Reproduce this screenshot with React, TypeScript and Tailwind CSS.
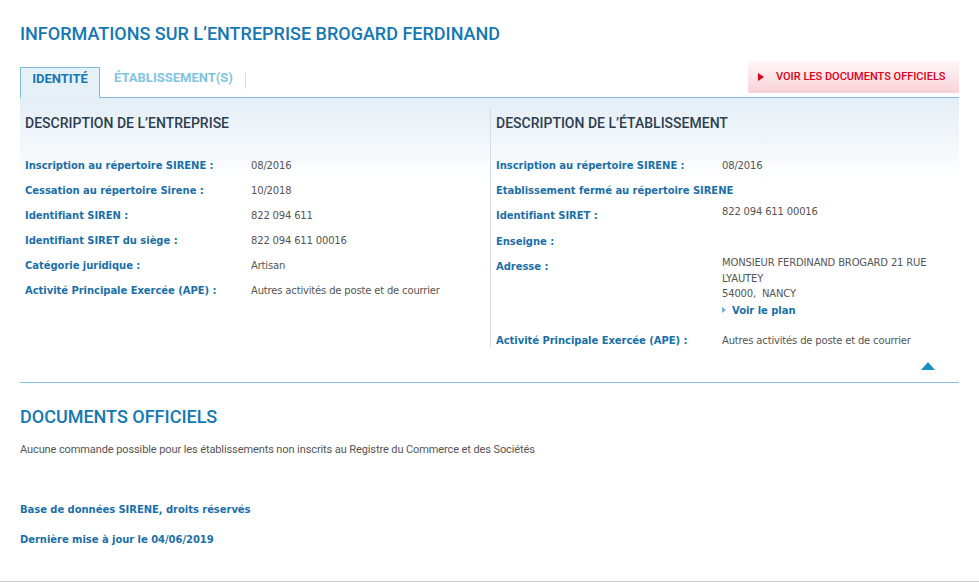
export default function App() {
  const din = "font-['Roboto',sans-serif]";
  const tah = "font-['DejaVu_Sans',sans-serif]";

  const leftRows = [
    ["Inscription au répertoire SIRENE :", "08/2016"],
    ["Cessation au répertoire Sirene :", "10/2018"],
    ["Identifiant SIREN :", "822 094 611"],
    ["Identifiant SIRET du siège :", "822 094 611 00016"],
    ["Catégorie juridique :", "Artisan"],
    ["Activité Principale Exercée (APE) :", "Autres activités de poste et de courrier"],
  ];

  return (
    <div className="min-h-[582px] bg-white px-5 border-b border-[#c8c8c8]">
      {/* Titre */}
      <h1 className={`${din} pt-[24px] text-[18px] leading-[20px] font-medium text-[#1478b4]`}>
        INFORMATIONS SUR L’ENTREPRISE BROGARD FERDINAND
      </h1>

      {/* Onglets */}
      <div className="mt-[23px] flex items-end">
        <div className="flex items-end flex-1">
          <div className={`${din} h-[31px] w-[80px] border border-b-0 border-[#7fbcd9] bg-[#e6f0f7] text-[13px] font-bold text-[#1478b4] flex items-center justify-center`}>
            <span className="mb-[8px]">IDENTITÉ</span>
          </div>
          <div className="flex-1 h-[31px] border-b border-[#7fbcd9] flex items-center">
            <span className={`${din} ml-[14px] mb-[8px] text-[13px] font-bold text-[#80c4e0]`}>ÉTABLISSEMENT(S)</span>
            <span className="ml-[12px] mb-[2px] h-[16px] w-px bg-[#dcdcdc]" />
            <span className="flex-1" />
            <div className="self-start -mt-[6px] w-[211px] h-[32px] bg-[linear-gradient(to_bottom,#fff6f7,#f9d3d8)] flex items-center">
              <svg width="6" height="8" viewBox="0 0 6 8" className="ml-[10px]">
                <path d="M0 0 L6 4 L0 8 Z" fill="#d9001b" />
              </svg>
              <span className={`${din} ml-[12px] text-[11px] font-medium text-[#d9001b]`}>VOIR LES DOCUMENTS OFFICIELS</span>
            </div>
          </div>
        </div>
      </div>

      {/* Panneau description */}
      <div className="flex bg-[linear-gradient(to_bottom,#e4eef6_0px,#ffffff_85px)] pb-[15px]">
        <div className="w-[470px] pl-[5px]">
          <h2 className={`${din} pt-[15px] text-[14px] leading-[20px] font-medium text-[#2d3e50]`}>
            DESCRIPTION DE L’ENTREPRISE
          </h2>
          <div className="mt-[26px]">
            {leftRows.map(([label, value]) => (
              <div key={label} className={`${tah} flex text-[10px] leading-[13px] mb-[12px]`}>
                <span className="w-[226px] font-bold text-[#1b6fa8] tracking-[-0.05px]">{label}</span>
                <span className="text-[#555] tracking-[-0.17px]">{value}</span>
              </div>
            ))}
          </div>
        </div>

        <div className="mt-[10px] flex-1 border-l border-[#d3dde6] pl-[5px]">
          <h2 className={`${din} pt-[5px] text-[14px] leading-[20px] font-medium text-[#2d3e50]`}>
            DESCRIPTION DE L’ÉTABLISSEMENT
          </h2>
          <div className={`${tah} mt-[26px] text-[10px] leading-[13px]`}>
            <div className="flex mb-[12px]">
              <span className="w-[226px] font-bold text-[#1b6fa8] tracking-[-0.05px]">Inscription au répertoire SIRENE :</span>
              <span className="text-[#555] tracking-[-0.17px]">08/2016</span>
            </div>
            <div className="mb-[12px] font-bold text-[#1b6fa8] tracking-[-0.05px]">Etablissement fermé au répertoire SIRENE</div>
            <div className="flex mb-[13px]">
              <span className="w-[226px] font-bold text-[#1b6fa8] tracking-[-0.05px]">Identifiant SIRET :</span>
              <span className="-mt-[4px] text-[#555] tracking-[-0.17px]">822 094 611 00016</span>
            </div>
            <div className="mb-[12px] font-bold text-[#1b6fa8] tracking-[-0.05px]">Enseigne :</div>
            <div className="flex">
              <span className="w-[226px] shrink-0 font-bold text-[#1b6fa8] tracking-[-0.05px]">Adresse :</span>
              <div className="-mt-[5px] w-[215px] text-[#555] leading-[15.5px] tracking-[-0.17px]">
                <div>MONSIEUR FERDINAND BROGARD 21 RUE LYAUTEY</div>
                <div>54000,&nbsp; NANCY</div>
                <div className="mt-[1px] flex items-center font-bold text-[#1b6fa8] tracking-[-0.05px]">
                  <svg width="4" height="6" viewBox="0 0 4 6" className="mr-[6px]">
                    <path d="M0 0 L4 3 L0 6 Z" fill="#6fb0d6" />
                  </svg>
                  Voir le plan
                </div>
              </div>
            </div>
            <div className="flex mt-[16px]">
              <span className="w-[226px] font-bold text-[#1b6fa8] tracking-[-0.05px]">Activité Principale Exercée (APE) :</span>
              <span className="text-[#555] tracking-[-0.17px]">Autres activités de poste et de courrier</span>
            </div>
          </div>
        </div>
      </div>

      {/* Flèche retour */}
      <div className="flex justify-end pr-[24px] h-[20px] items-start">
        <svg width="14" height="8" viewBox="0 0 14 8">
          <path d="M0 8 L7 0 L14 8 Z" fill="#1a8fc5" />
        </svg>
      </div>
      <div className="h-px bg-[#7fc3e0]" />

      {/* Documents officiels */}
      <h2 className={`${din} mt-[23px] text-[18px] leading-[22px] font-medium text-[#1478b4]`}>
        DOCUMENTS OFFICIELS
      </h2>
      <p className={`${din} mt-[15px] text-[11px] leading-[14px] text-[#555] tracking-[-0.1px]`}>
        Aucune commande possible pour les établissements non inscrits au Registre du Commerce et des Sociétés
      </p>

      <p className={`${tah} mt-[46px] text-[10px] leading-[13px] font-bold text-[#1b6fa8] tracking-[-0.05px]`}>
        Base de données SIRENE, droits réservés
      </p>
      <p className={`${tah} mt-[17px] text-[10px] leading-[13px] font-bold text-[#1b6fa8] tracking-[-0.05px]`}>
        Dernière mise à jour le 04/06/2019
      </p>
    </div>
  );
}
